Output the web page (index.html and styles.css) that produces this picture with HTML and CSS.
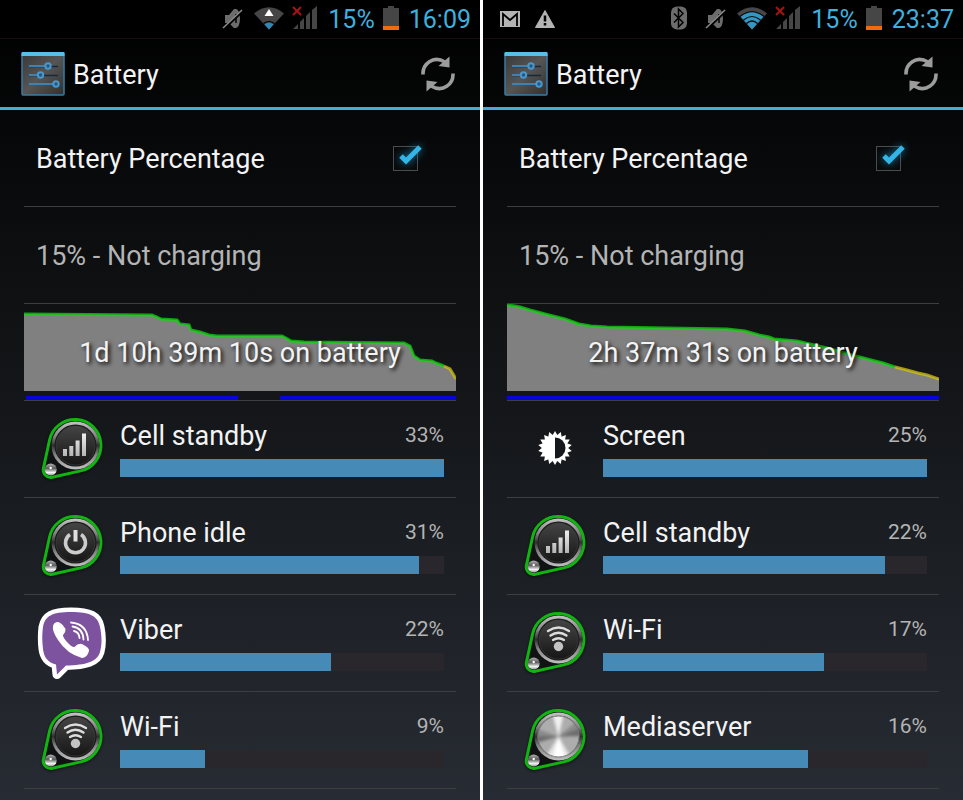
FILE: index.html
```
<!DOCTYPE html>
<html lang="en">
<head>
    <meta charset="UTF-8">
    <meta name="viewport" content="width=device-width, initial-scale=1.0">
    <title>Battery</title>
    <link rel="stylesheet" href="styles.css">
</head>
<body>
    <!-- shared icons -->
    <svg class="defs" width="0" height="0" aria-hidden="true">
        <defs>
            <linearGradient id="ring" x1="0" y1="0" x2="0" y2="1">
                <stop offset="0" stop-color="#c4c4c4"/>
                <stop offset="0.3" stop-color="#858585"/>
                <stop offset="0.5" stop-color="#303030"/>
                <stop offset="0.7" stop-color="#858585"/>
                <stop offset="1" stop-color="#c0c0c0"/>
            </linearGradient>
            <linearGradient id="disc" x1="0" y1="0" x2="0" y2="1">
                <stop offset="0" stop-color="#444"/>
                <stop offset="1" stop-color="#161616"/>
            </linearGradient>
            <linearGradient id="glyph" x1="0" y1="0" x2="0" y2="1">
                <stop offset="0" stop-color="#f0f0f0"/>
                <stop offset="1" stop-color="#b4b4b4"/>
            </linearGradient>
            <linearGradient id="ball" x1="0" y1="0" x2="0" y2="1">
                <stop offset="0" stop-color="#b0b0b0"/>
                <stop offset="0.4" stop-color="#5c5c5c"/>
                <stop offset="0.75" stop-color="#f0f0f0"/>
                <stop offset="1" stop-color="#999"/>
            </linearGradient>
            <linearGradient id="panel" x1="0" y1="0" x2="1" y2="1">
                <stop offset="0" stop-color="#383838"/>
                <stop offset="0.5" stop-color="#555"/>
                <stop offset="1" stop-color="#303030"/>
            </linearGradient>
            <filter id="soft" x="-20%" y="-20%" width="140%" height="140%">
                <feGaussianBlur stdDeviation="1.5"/>
            </filter>
            <clipPath id="metal-clip"><circle cx="39.5" cy="32.5" r="21"/></clipPath>
        </defs>

        <symbol id="i-mute" viewBox="0 0 22 24">
            <path d="M3 9h4l5-6h2v19h-2l-5-5H3z" fill="#6c6c6c"/>
            <ellipse cx="14" cy="12.500" rx="4" ry="9.500" fill="#6c6c6c"/>
            <path d="M14 8v9" stroke="#1c1c1c" stroke-width="2"/>
            <path d="M2 22.500 20 5.500" stroke="#000" stroke-width="3"/>
            <path d="M1 22 20 4" stroke="#8c8c8c" stroke-width="1.500"/>
        </symbol>
        <symbol id="i-wifi-idle" viewBox="0 0 30 24">
            <path d="M0 7.500Q15-5 30 7.500L15 23.500z" fill="#464646"/>
            <path d="M9.500 17.500Q15 13.500 20.500 17.500" fill="none" stroke="#000" stroke-width="1.200"/>
            <path d="M10.500 18.500Q15 15 19.500 18.500L15 23.500z" fill="#2f88b4"/>
            <path d="M15 3l4.500 7h-9z" fill="#fff"/>
        </symbol>
        <symbol id="i-wifi" viewBox="0 0 30 24">
            <path d="M0 7.500Q15-5 30 7.500L15 23.500z" fill="#464646"/>
            <path d="M3.500 10.500Q15 1 26.500 10.500L15 23.500z" fill="#3197c4"/>
            <path d="M3 10.500Q15 1 27 10.500M6.500 14Q15 7 23.500 14M9.500 17.500Q15 12.500 20.500 17.500" fill="none" stroke="#000" stroke-width="1.200"/>
        </symbol>
        <symbol id="i-signal" viewBox="0 0 26 24">
            <path d="M1 23l5-5v5zM8 23v-7l4-4v11zM14 23V10l4-4v17zM20 23V4l5-4v23z" fill="#464646"/>
            <path d="M1 1l8 8M9 1L1 9" stroke="#a51515" stroke-width="2"/>
        </symbol>
        <symbol id="i-battery" viewBox="0 0 16 24">
            <path d="M5 0h6v2h5v22H0V2h5z" fill="#464646"/>
            <path d="M0 20h16v4H0z" fill="#f26c0d"/>
        </symbol>
        <symbol id="i-bluetooth" viewBox="0 0 16 24">
            <rect y="0.500" width="16" height="23" rx="6" fill="#6c6c6c"/>
            <path d="M3 7.500l9 9-4.500 4.500V3L12 7.500l-9 9" fill="none" stroke="#000" stroke-width="1.500"/>
        </symbol>
        <symbol id="i-gmail" viewBox="0 0 20 16">
            <path d="M0 0h20v16H0z" fill="#b4b4b4"/>
            <path d="M3 15V3l7 6 7-6v12" fill="none" stroke="#000" stroke-width="1.800"/>
        </symbol>
        <symbol id="i-warning" viewBox="0 0 20 18">
            <path d="M10 0.500L19.500 17.500H0.500z" fill="#b4b4b4" stroke="#b4b4b4" stroke-linejoin="round"/>
            <path d="M10 5.500v6M10 13v2.500" stroke="#000" stroke-width="2.500"/>
        </symbol>
        <symbol id="i-settings" viewBox="0 0 44 44">
            <rect x="1" y="1" width="42" height="42" rx="1" fill="url(#panel)" stroke="#3a7ba4" stroke-width="1.500"/>
            <path d="M0.500 1q0-1 1-1h41q1 0 1 1v3h-43z" fill="#58bfe8"/>
            <path d="M8 14.500h29M8 23.500h29" stroke="#15293a" stroke-width="1.500"/>
            <path d="M8 14h18M8 23h11M8 32h26" stroke="#3d82b4" stroke-width="2"/>
            <g fill="#24587e" stroke="#4a97cc" stroke-width="2">
                <circle cx="27" cy="14" r="2.700"/>
                <circle cx="19.500" cy="23" r="2.700"/>
                <circle cx="35" cy="32" r="2.700"/>
            </g>
        </symbol>
        <symbol id="i-refresh" viewBox="0 0 34 36">
            <g id="refresh-half">
                <path d="M2 18.500C1.500 8 12-1 24 6" fill="none" stroke="#9c9c9c" stroke-width="3.600"/>
                <path d="M28.500 0.500V11.500L17.500 10z" fill="#9c9c9c"/>
            </g>
            <use href="#refresh-half" transform="rotate(180 17 18)"/>
        </symbol>

        <!-- drop shaped button, the glyph goes on top -->
        <symbol id="i-pin" viewBox="0 0 72 72">
            <path d="M13.600 27.800A26 26 0 1 1 44.700 58.900L16.300 65.300A7.500 7.500 0 0 1 7.400 56.400Z" fill="#000" stroke="#000" stroke-width="3" opacity="0.600" filter="url(#soft)"/>
            <path d="M13.600 26.800A26 26 0 1 1 44.700 57.900L16.300 64.300A7.500 7.500 0 0 1 7.400 55.400Z" fill="#101214" stroke="#12b412" stroke-width="3"/>
            <circle cx="39.500" cy="32.500" r="24" fill="url(#ring)"/>
            <circle cx="39.500" cy="32.500" r="21" fill="#181818"/>
            <circle cx="39.500" cy="32.500" r="19.500" fill="url(#disc)" stroke="#484848" stroke-width="0.500"/>
            <circle cx="14.700" cy="56.500" r="6" fill="url(#ball)"/>
            <circle cx="14.700" cy="55" r="1.200" fill="#fff"/>
        </symbol>
        <symbol id="i-cell" viewBox="0 0 72 72">
            <use href="#i-pin" width="72" height="72"/>
            <path d="M27 43v-7h4v7zM33.300 43V33h4v10zM39.600 43V27.500h4V43zM46 43V20.500h4V43z" fill="url(#glyph)"/>
        </symbol>
        <symbol id="i-power" viewBox="0 0 72 72">
            <use href="#i-pin" width="72" height="72"/>
            <path d="M34 24.500a10 10 0 1 0 11 0" fill="none" stroke="#ccc" stroke-width="3.500"/>
            <path d="M39.500 20v11.500" stroke="#e0e0e0" stroke-width="4"/>
        </symbol>
        <symbol id="i-wlan" viewBox="0 0 72 72">
            <use href="#i-pin" width="72" height="72"/>
            <path d="M29 24Q39.500 17 50 24M31.500 28.500Q39.500 23 47.500 28.500M34 33Q39.500 29.500 45 33" fill="none" stroke="#ddd" stroke-width="2.300" stroke-linecap="round"/>
            <circle cx="39.500" cy="39.500" r="4.700" fill="#c4c4c4"/>
        </symbol>
        <symbol id="i-media" viewBox="0 0 72 72">
            <use href="#i-pin" width="72" height="72"/>
            <g clip-path="url(#metal-clip)">
                <circle cx="39.500" cy="32.500" r="21" fill="#adadad"/>
                <g filter="url(#soft)">
                    <path d="M39.500 32.500L32 5H46z" fill="#f0f0f0"/>
                    <path d="M39.500 32.500L22 60H56z" fill="#e4e4e4"/>
                    <path d="M39.500 32.500L32 60H48z" fill="#fff"/>
                    <path d="M39.500 32.500L10 22V38z" fill="#8a8a8a"/>
                    <path d="M39.500 32.500L10 32V41z" fill="#6c6c6c"/>
                    <path d="M39.500 32.500L66 10 70 30z" fill="#8a8a8a"/>
                    <path d="M39.500 32.500L70 21V32z" fill="#6c6c6c"/>
                </g>
            </g>
            <circle cx="39.500" cy="32.500" r="20.500" fill="none" stroke="#777"/>
        </symbol>
        <symbol id="i-viber" viewBox="0 0 72 72">
            <path d="M35 5C54 5 62 9 64 20C66 30 66 37 64 45C61 55 50 58 30 58.500L21 67.500L20 57.500C11 55 8 50 7 42C6 33 6 28 7 20C9 9 16 5 35 5Z" fill="none" stroke="#fff" stroke-width="9" stroke-linejoin="round"/>
            <path d="M35 5C54 5 62 9 64 20C66 30 66 37 64 45C61 55 50 58 30 58.500L21 67.500L20 57.500C11 55 8 50 7 42C6 33 6 28 7 20C9 9 16 5 35 5Z" fill="#7d529e"/>
            <path d="M17 19Q18 15 22 15Q26 16 29.500 22Q30 25 27 28Q27 31 32 36Q36 40.500 38.500 40Q42 36 46 37Q54 41 53 44Q51 51 46 51Q31 47 22 33Q16 24 17 19Z" fill="#fff"/>
            <path d="M35 15.500Q51 17 52 33M36.500 19.500Q47 21 47.500 32.500M38 24Q43 25 43.500 31" fill="none" stroke="#fff" stroke-width="1.800" stroke-linecap="round"/>
        </symbol>
        <symbol id="i-screen" viewBox="0 0 72 72">
            <g fill="#fff">
                <path id="ray" d="M36 18L50.700 43.500H21.300z"/>
                <use href="#ray" transform="rotate(20 36 35)"/>
                <use href="#ray" transform="rotate(40 36 35)"/>
                <use href="#ray" transform="rotate(60 36 35)"/>
                <use href="#ray" transform="rotate(80 36 35)"/>
                <use href="#ray" transform="rotate(100 36 35)"/>
            </g>
            <path d="M36 24.500a10.500 10.500 0 0 1 0 21z" fill="#16191c"/>
        </symbol>
    </svg>

    <main class="screens">
        <section class="phone">
            <div class="statusbar">
                <div class="system">
                    <svg class="icon-mute"><use href="#i-mute"/></svg>
                    <svg class="icon-wifi"><use href="#i-wifi-idle"/></svg>
                    <svg class="icon-signal"><use href="#i-signal"/></svg>
                    <span class="charge">15%</span>
                    <svg class="icon-battery"><use href="#i-battery"/></svg>
                    <span class="clock">16:09</span>
                </div>
            </div>
            <header class="actionbar">
                <svg class="icon-app"><use href="#i-settings"/></svg>
                <h1>Battery</h1>
                <button class="refresh" type="button" aria-label="Refresh"><svg><use href="#i-refresh"/></svg></button>
            </header>
            <div class="content">
                <label class="item setting" for="percentage-1">
                    <span>Battery Percentage</span>
                    <span class="check">
                        <input type="checkbox" id="percentage-1" checked>
                        <svg class="tick" viewBox="0 0 28 24"><path d="M6 12l5 5L25 3" fill="none" stroke="#33b5e5" stroke-width="5"/></svg>
                    </span>
                </label>
                <div class="item state">15% - Not charging</div>
                <div class="item history">
                    <svg class="graph" viewBox="0 0 432 96" preserveAspectRatio="none">
                        <path class="area" d="M0 10L128 11L133 13L137 15L153 16L156 20L165 21L167 26L176 28L185 31L193 32L258 32L262 34L267 37L280 38L380 39L386 42L390 52L396 56L408 57L412 59L420 62L426 65L432 75V87H0Z"/>
                        <path class="good" d="M0 10L128 11L133 13L137 15L153 16L156 20L165 21L167 26L176 28L185 31L193 32L258 32L262 34L267 37L280 38L380 39L386 42L390 52L396 56L408 57L412 59L420 62"/>
                        <path class="low" d="M420 62L426 65L432 75"/>
                        <path class="signal" d="M2 94H214M256 94H432"/>
                    </svg>
                    <span class="duration">1d 10h 39m 10s on battery</span>
                </div>
                <ul class="usage">
                    <li class="item app">
                        <svg class="icon"><use href="#i-cell"/></svg>
                        <span class="name">Cell standby</span>
                        <span class="percent">33%</span>
                        <div class="bar"><div class="fill" style="width: 100%"></div></div>
                    </li>
                    <li class="item app">
                        <svg class="icon"><use href="#i-power"/></svg>
                        <span class="name">Phone idle</span>
                        <span class="percent">31%</span>
                        <div class="bar"><div class="fill" style="width: 92.3%"></div></div>
                    </li>
                    <li class="item app">
                        <svg class="icon"><use href="#i-viber"/></svg>
                        <span class="name">Viber</span>
                        <span class="percent">22%</span>
                        <div class="bar"><div class="fill" style="width: 65.1%"></div></div>
                    </li>
                    <li class="item app">
                        <svg class="icon"><use href="#i-wlan"/></svg>
                        <span class="name">Wi-Fi</span>
                        <span class="percent">9%</span>
                        <div class="bar"><div class="fill" style="width: 26.2%"></div></div>
                    </li>
                </ul>
            </div>
        </section>

        <section class="phone">
            <div class="statusbar">
                <div class="notifications">
                    <svg class="icon-gmail"><use href="#i-gmail"/></svg>
                    <svg class="icon-warning"><use href="#i-warning"/></svg>
                </div>
                <div class="system">
                    <svg class="icon-bluetooth"><use href="#i-bluetooth"/></svg>
                    <svg class="icon-mute"><use href="#i-mute"/></svg>
                    <svg class="icon-wifi"><use href="#i-wifi"/></svg>
                    <svg class="icon-signal"><use href="#i-signal"/></svg>
                    <span class="charge">15%</span>
                    <svg class="icon-battery"><use href="#i-battery"/></svg>
                    <span class="clock">23:37</span>
                </div>
            </div>
            <header class="actionbar">
                <svg class="icon-app"><use href="#i-settings"/></svg>
                <h1>Battery</h1>
                <button class="refresh" type="button" aria-label="Refresh"><svg><use href="#i-refresh"/></svg></button>
            </header>
            <div class="content">
                <label class="item setting" for="percentage-2">
                    <span>Battery Percentage</span>
                    <span class="check">
                        <input type="checkbox" id="percentage-2" checked>
                        <svg class="tick" viewBox="0 0 28 24"><path d="M6 12l5 5L25 3" fill="none" stroke="#33b5e5" stroke-width="5"/></svg>
                    </span>
                </label>
                <div class="item state">15% - Not charging</div>
                <div class="item history">
                    <svg class="graph" viewBox="0 0 432 96" preserveAspectRatio="none">
                        <path class="area" d="M0 1L8 2L13 3L23 6L38 10L50 13L58 15L72 20L84 22L100 23L220 25L238 27L252 31L262 33L267 35L290 37L320 44L345 51L368 57L376 59L388 63L400 66L411 69L420 71L432 75V87H0Z"/>
                        <path class="good" d="M0 1L8 2L13 3L23 6L38 10L50 13L58 15L72 20L84 22L100 23L220 25L238 27L252 31L262 33L267 35L290 37L320 44L345 51L368 57L376 59L388 63"/>
                        <path class="low" d="M388 63L400 66L411 69L420 71L432 75"/>
                        <path class="signal" d="M0 94H432"/>
                    </svg>
                    <span class="duration">2h 37m 31s on battery</span>
                </div>
                <ul class="usage">
                    <li class="item app">
                        <svg class="icon"><use href="#i-screen"/></svg>
                        <span class="name">Screen</span>
                        <span class="percent">25%</span>
                        <div class="bar"><div class="fill" style="width: 100%"></div></div>
                    </li>
                    <li class="item app">
                        <svg class="icon"><use href="#i-cell"/></svg>
                        <span class="name">Cell standby</span>
                        <span class="percent">22%</span>
                        <div class="bar"><div class="fill" style="width: 87%"></div></div>
                    </li>
                    <li class="item app">
                        <svg class="icon"><use href="#i-wlan"/></svg>
                        <span class="name">Wi-Fi</span>
                        <span class="percent">17%</span>
                        <div class="bar"><div class="fill" style="width: 68.2%"></div></div>
                    </li>
                    <li class="item app">
                        <svg class="icon"><use href="#i-media"/></svg>
                        <span class="name">Mediaserver</span>
                        <span class="percent">16%</span>
                        <div class="bar"><div class="fill" style="width: 63.3%"></div></div>
                    </li>
                </ul>
            </div>
        </section>
    </main>
</body>
</html>
```
FILE: styles.css
```
* {
    box-sizing: border-box;
}
body {
    margin: 0;
    background: #fff;
    color: #f3f3f3;
    font-family: Roboto, "Noto Sans", sans-serif;
    font-size: 27px;
    line-height: 32px;
}
svg {
    display: block;
    flex: none;
}
.defs {
    position: absolute;
}
.screens {
    display: grid;
    grid-template-columns: 1fr 1fr;
    gap: 3px;
}
.phone {
    min-height: 100vh;
    background: linear-gradient(#000, #101214 40%, #272b33);
}

/* status bar */
.statusbar {
    display: flex;
    align-items: center;
    height: 39px;
    padding: 0 9px 2px 17px;
    background: #000;
    border-bottom: 1px solid #140e0e;
    color: #3fb0de;
    font-size: 25px;
}
.notifications, .system {
    display: flex;
    align-items: center;
}
.notifications {
    gap: 15px;
    padding-top: 2px;
}
.system {
    margin-left: auto;
    gap: 8px;
}
.charge, .clock {
    margin-left: 2px;
    padding-top: 4px;
}
.icon-mute {
    width: 22px;
    height: 24px;
    margin-right: 2px;
}
.icon-wifi {
    width: 30px;
    height: 24px;
}
.icon-signal {
    width: 26px;
    height: 24px;
}
.icon-battery {
    width: 16px;
    height: 24px;
}
.icon-bluetooth {
    width: 16px;
    height: 24px;
    margin-right: 10px;
}
.icon-gmail {
    width: 20px;
    height: 16px;
}
.icon-warning {
    width: 20px;
    height: 18px;
}

/* action bar */
.actionbar {
    display: flex;
    align-items: center;
    height: 71px;
    padding: 2px 25px 0 21px;
    border-bottom: 3px solid #42acdb;
}
.icon-app {
    width: 44px;
    height: 44px;
}
h1 {
    margin: 0 auto 0 8px;
    padding-top: 2px;
    font-size: 27px;
    font-weight: normal;
}
.refresh {
    padding: 0;
    border: none;
    background: none;
    cursor: pointer;
}
.refresh svg {
    width: 34px;
    height: 36px;
}

/* list */
.content {
    padding: 0 24px;
}
.item {
    height: 97px;
    border-bottom: 1px solid #3c3e40;
}
.setting, .state {
    display: flex;
    align-items: center;
    padding: 2px 38px 0 12px;
}
.setting {
    justify-content: space-between;
}
.state {
    color: #b4b4b4;
}
.check {
    position: relative;
}
.check input {
    display: block;
    width: 25px;
    height: 25px;
    margin: 0 0 2px;
    appearance: none;
    border: 1px solid #4c4c4c;
}
.tick {
    position: absolute;
    top: -2px;
    left: 2px;
    width: 28px;
    height: 24px;
    overflow: visible;
    pointer-events: none;
    filter: drop-shadow(0 0 4px #1787b4);
}
.check input:not(:checked) + .tick {
    display: none;
}

/* history graph */
.history {
    display: grid;
    align-items: center;
    justify-items: center;
}
.graph, .duration {
    grid-area: 1 / 1;
}
.graph {
    width: 100%;
    height: 96px;
}
.graph path {
    fill: none;
    stroke-width: 3;
}
.graph .area {
    fill: #808080;
}
.graph .good {
    stroke: rgba(16, 216, 16, 0.75);
}
.graph .low {
    stroke: rgba(212, 196, 16, 0.75);
}
.graph .signal {
    stroke: #0505dc;
    stroke-width: 4;
}
.duration {
    padding-top: 2px;
    text-shadow: 2px 2px 4px #000;
}

/* apps */
.usage {
    margin: 0;
    padding: 0;
    list-style: none;
}
.app {
    display: grid;
    grid-template-columns: 96px 1fr auto;
    grid-template-rows: 58px 18px 20px;
    align-items: center;
    padding-right: 12px;
}
.icon {
    grid-row: 1 / 4;
    justify-self: center;
    width: 72px;
    height: 72px;
}
.name {
    padding-top: 12px;
}
.percent {
    padding-top: 10px;
    color: #b4b4b4;
    font-size: 21px;
}
.bar {
    grid-column: 2 / 4;
    height: 18px;
    background: #29262c;
}
.fill {
    height: 100%;
    background: #468ab8;
}
```
